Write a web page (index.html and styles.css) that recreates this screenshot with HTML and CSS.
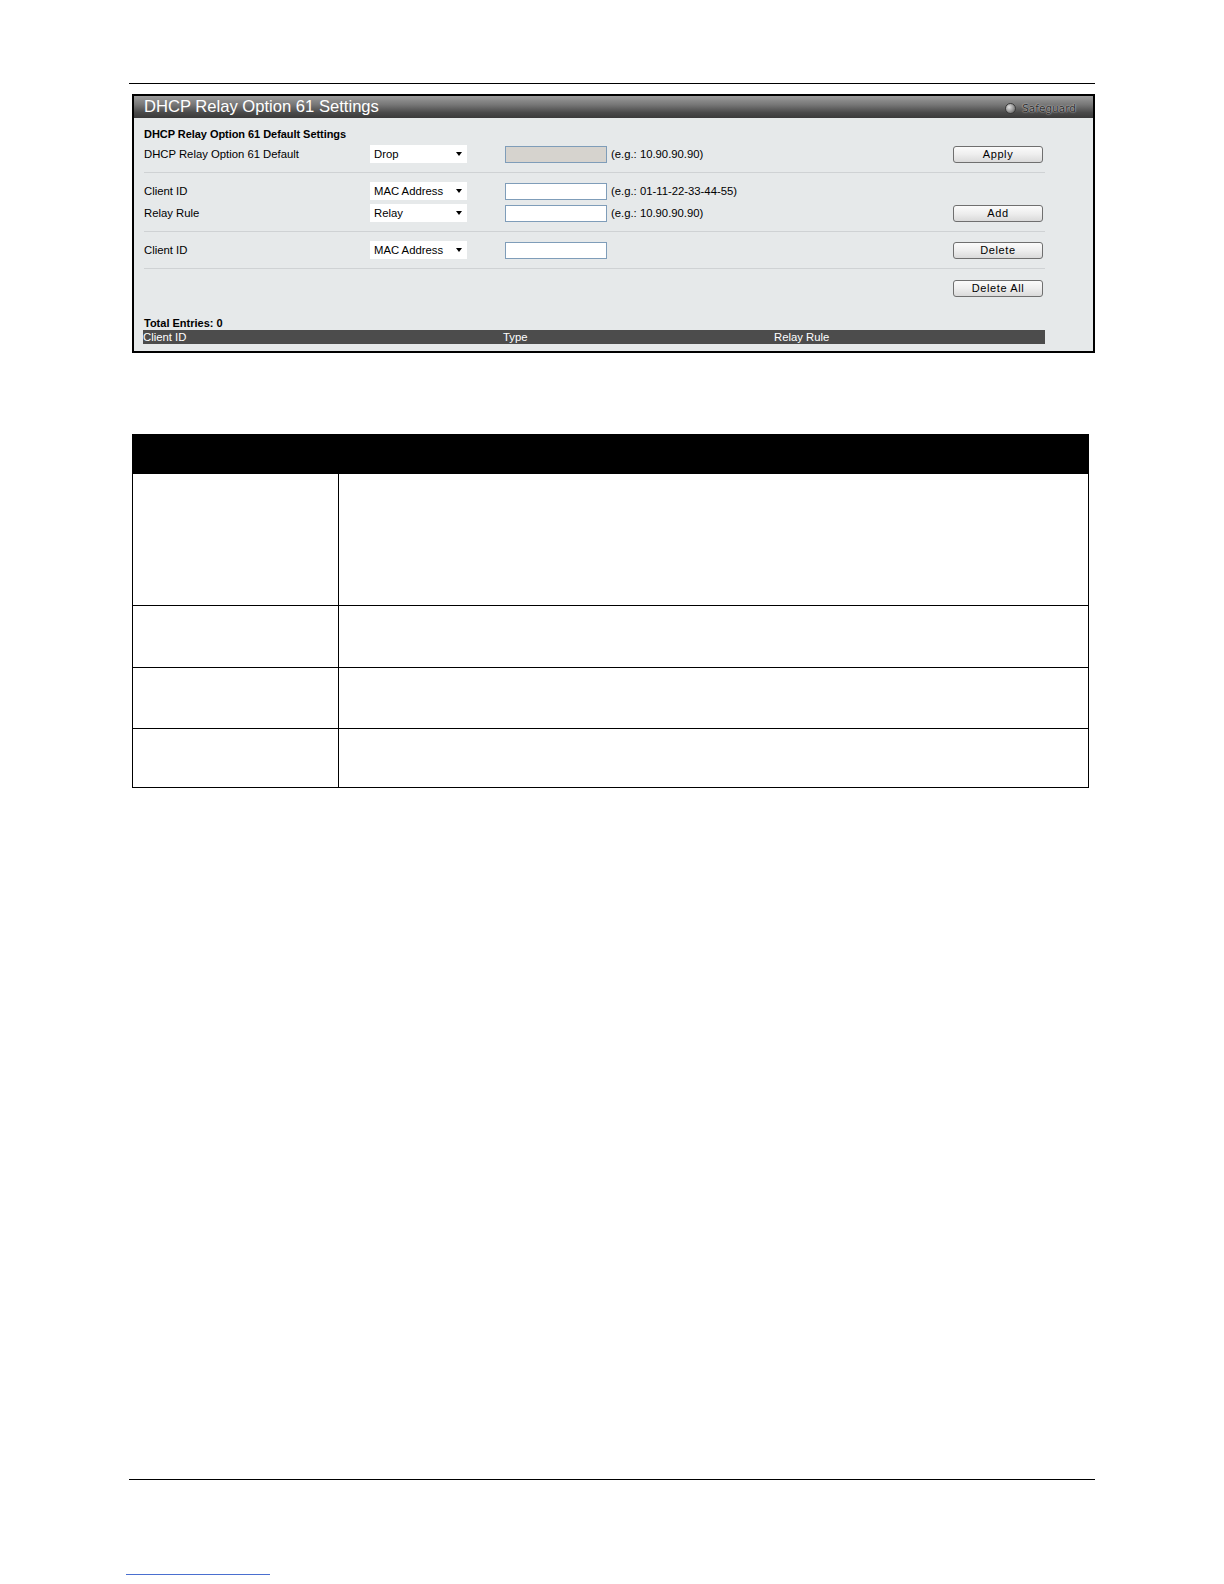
FILE: index.html
```html
<!DOCTYPE html>
<html>
<head>
<meta charset="utf-8">
<link rel="stylesheet" href="styles.css">
</head>
<body>
<div class="page">
  <div class="rule rule-top"></div>

  <div class="panel">
    <div class="titlebar">
      <span class="title">DHCP Relay Option 61 Settings</span>
      <span class="safeguard"><span class="led"></span>Safeguard</span>
    </div>
    <div class="panel-body">
      <div class="heading">DHCP Relay Option 61 Default Settings</div>
      <div class="row">
        <span class="lbl">DHCP Relay Option 61 Default</span>
        <span class="sel"><span>Drop</span><span class="arrow"></span></span>
        <span class="field"><span class="input disabled"></span><span class="hint">(e.g.: 10.90.90.90)</span></span>
        <span class="btn">Apply</span>
      </div>
      <div class="sep"></div>
      <div class="row">
        <span class="lbl">Client ID</span>
        <span class="sel"><span>MAC Address</span><span class="arrow"></span></span>
        <span class="field"><span class="input"></span><span class="hint">(e.g.: 01-11-22-33-44-55)</span></span>
        <span class="btn-space"></span>
      </div>
      <div class="row">
        <span class="lbl">Relay Rule</span>
        <span class="sel"><span>Relay</span><span class="arrow"></span></span>
        <span class="field"><span class="input"></span><span class="hint">(e.g.: 10.90.90.90)</span></span>
        <span class="btn">Add</span>
      </div>
      <div class="sep"></div>
      <div class="row">
        <span class="lbl">Client ID</span>
        <span class="sel"><span>MAC Address</span><span class="arrow"></span></span>
        <span class="field"><span class="input"></span></span>
        <span class="btn">Delete</span>
      </div>
      <div class="sep"></div>
      <div class="row row-last">
        <span class="lbl"></span>
        <span class="sel-space"></span>
        <span class="field"></span>
        <span class="btn">Delete All</span>
      </div>
      <div class="total">Total Entries: 0</div>
      <div class="thead">
        <span class="th th-id">Client ID</span>
        <span class="th th-type">Type</span>
        <span class="th th-rule">Relay Rule</span>
      </div>
    </div>
  </div>

  <table class="desc">
    <tr class="desc-head"><th class="c1"></th><th class="c2"></th></tr>
    <tr class="r1"><td class="c1"></td><td class="c2"></td></tr>
    <tr class="r2"><td class="c1"></td><td class="c2"></td></tr>
    <tr class="r3"><td class="c1"></td><td class="c2"></td></tr>
    <tr class="r4"><td class="c1"></td><td class="c2"></td></tr>
  </table>

  <div class="spacer"></div>
  <div class="rule rule-bottom"></div>
  <div class="footlink"></div>
</div>
</body>
</html>
```

FILE: styles.css
```css
html, body {
  margin: 0;
  padding: 0;
  background: #ffffff;
  overflow: hidden;
}
body {
  font-family: "Liberation Sans", Arial, sans-serif;
  font-size: 11.3px;
  color: #000;
}
.page {
  width: 966px;
  margin-left: 129px;
  padding-top: 83px;
  height: 1584px;
  box-sizing: border-box;
  display: flex;
  flex-direction: column;
}
.rule {
  height: 1px;
  background: #000;
  flex: none;
}
.panel {
  margin-top: 10px;
  margin-left: 3px;
  border: 2px solid #000;
  background: #e6e9ea;
  display: flex;
  flex-direction: column;
  flex: none;
}
.titlebar {
  height: 22px;
  background: linear-gradient(to bottom, #9c9c9c 0%, #767676 40%, #4a4a4a 75%, #3a3a3a 100%);
  display: flex;
  align-items: center;
  justify-content: space-between;
  padding: 0 17px 0 10px;
}
.title {
  color: #ffffff;
  font-size: 16.6px;
  line-height: 22px;
}
.safeguard {
  display: flex;
  align-items: center;
  gap: 6px;
  font-family: "DejaVu Sans", Verdana, sans-serif;
  font-size: 10.5px;
  color: #2e2e2e;
  text-shadow: 0 0 1px #d8d8d8, 0 0 2px #b8b8b8;
  padding-top: 2px;
}
.led {
  width: 11px;
  height: 11px;
  border-radius: 50%;
  background: radial-gradient(circle at 35% 35%, #e0e0e0 0%, #9a9a9a 50%, #555555 100%);
  border: 1px solid #3a3a3a;
  box-sizing: border-box;
}
.panel-body {
  padding: 9px 48px 7px 10px;
  display: flex;
  flex-direction: column;
}
.heading {
  font-weight: bold;
  font-size: 11px;
  letter-spacing: -0.05px;
  line-height: 15px;
  height: 16px;
}
.row {
  height: 22px;
  display: flex;
  align-items: center;
}
.lbl {
  width: 226px;
  flex: none;
}
.sel {
  width: 97px;
  height: 18px;
  background: #ffffff;
  flex: none;
  display: flex;
  align-items: center;
  justify-content: space-between;
  padding: 0 5px 0 4px;
  box-sizing: border-box;
}
.sel-space {
  width: 97px;
  flex: none;
}
.arrow {
  width: 0;
  height: 0;
  border-left: 3px solid transparent;
  border-right: 3px solid transparent;
  border-top: 4px solid #000;
}
.field {
  margin-left: 38px;
  flex: 1;
  display: flex;
  align-items: center;
  gap: 4px;
}
.input {
  width: 102px;
  height: 17px;
  border: 1px solid #7f9db9;
  background: #ffffff;
  box-sizing: border-box;
  flex: none;
}
.input.disabled {
  background: #d6d3ce;
}
.btn {
  width: 90px;
  height: 17px;
  flex: none;
  box-sizing: border-box;
  border: 1px solid #6f6f6f;
  border-radius: 3px;
  background: linear-gradient(to bottom, #fbfbfb 0%, #eeeeee 50%, #dadada 100%);
  display: flex;
  align-items: center;
  justify-content: center;
  margin-right: 2px;
  font-size: 11px;
  letter-spacing: 0.6px;
}
.btn-space {
  width: 92px;
  flex: none;
}
.sep {
  height: 1px;
  background: #cfd2d4;
  margin: 7px 0 7px 0;
}
.row-last {
  margin-top: 1px;
}
.total {
  margin-top: 17px;
  font-weight: bold;
  font-size: 11px;
  line-height: 14px;
}
.thead {
  height: 14px;
  background: #4c4c4c;
  color: #ffffff;
  display: flex;
  align-items: center;
  margin-left: -1px;
}
.th {
  line-height: 14px;
}
.th-id { width: 360px; }
.th-type { width: 271px; }
.desc {
  margin-top: 81px;
  margin-left: 3px;
  width: 957px;
  border-collapse: collapse;
  table-layout: fixed;
  flex: none;
}
.desc th, .desc td {
  border: 1px solid #000;
  padding: 0;
}
.desc-head th {
  background: #000;
  height: 38px;
}
.desc .c1 { width: 205px; }
.r1 td { height: 131px; }
.r2 td { height: 61px; }
.r3 td { height: 60px; }
.r4 td { height: 58px; }
.spacer {
  flex: 1;
}
.rule-bottom {
  margin-bottom: 94px;
}
.footlink {
  height: 1px;
  width: 144px;
  margin-left: -3px;
  margin-bottom: 9px;
  background: #4a6fd0;
  flex: none;
}
```
